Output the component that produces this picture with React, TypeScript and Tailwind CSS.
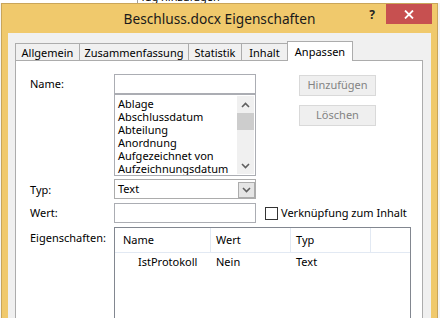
import React from 'react';

const ITEMS = ['Ablage', 'Abschlussdatum', 'Abteilung', 'Anordnung', 'Aufgezeichnet von', 'Aufzeichnungsdatum'];

const Chevron = ({ up }: { up?: boolean }) => (
  <svg width="9" height="6" viewBox="0 0 9 6">
    <polyline
      points={up ? '1,5 4.5,1.5 8,5' : '1,1 4.5,4.5 8,1'}
      fill="none"
      stroke="#606060"
      strokeWidth="1.6"
    />
  </svg>
);

const Tab = ({ label, w }: { label: string; w: string }) => (
  <div className={`${w} h-[17px] border-t border-l border-[#acacac] bg-[#f0f0f0] flex items-center justify-center pt-[1px] leading-none`}>
    {label}
  </div>
);

export default function App() {
  return (
    <div className="w-[440px] h-[318px] overflow-hidden bg-[#f4f4f4] font-['Noto_Sans',sans-serif] text-[11px] text-black">
      {/* strip of the window behind */}
      <div className="h-[3px] overflow-hidden bg-white flex">
        <div className="w-[137px]" />
        <div className="border-l border-[#a0a0a0] pl-[2px] -mt-[10px] leading-[13px] whitespace-nowrap">Tag hinzufügen</div>
      </div>

      <div className="ml-[1px] w-[437px] border border-[#c9a55a] bg-[#f0c96c] px-[6px]">
        {/* title bar */}
        <div className="h-[29px] flex">
          <div className="flex-1" />
          <div className="self-center pt-[1px] text-[13.7px] leading-none text-[#1a1a1a] whitespace-nowrap">Beschluss.docx Eigenschaften</div>
          <div className="flex-1 flex justify-end">
            <div className="mt-[5px] mr-[11px] text-[12px] font-bold leading-[12px] text-[#222]">?</div>
            <div className="w-[46px] h-[20px] -mr-[1px] bg-[#c75050] flex items-center justify-center">
              <svg width="10" height="9" viewBox="0 0 10 9">
                <path d="M1 0.5 L9 8.5 M9 0.5 L1 8.5" stroke="#fff" strokeWidth="1.8" />
              </svg>
            </div>
          </div>
        </div>

        {/* client area */}
        <div className="bg-[#f0f0f0] pt-[8px] pl-[7px] pr-[8px] h-[300px]">
          <div className="flex items-end">
            <Tab label="Allgemein" w="w-[64px]" />
            <Tab label="Zusammenfassung" w="w-[109px]" />
            <Tab label="Statistik" w="w-[53px]" />
            <Tab label="Inhalt" w="w-[46px]" />
            <div className="relative z-10 w-[66px] h-[20px] -mb-px border-t border-x border-[#acacac] bg-white flex justify-center pt-[4px] leading-[12px]">
              Anpassen
            </div>
          </div>

          <div className="border border-[#acacac] bg-white h-[280px] pl-[14px] pt-[13px]">
            {/* Name */}
            <div className="flex items-start">
              <div className="w-[84px] h-[20px] flex items-center">Name:</div>
              <div className="w-[142px]">
                <div className="h-[20px] border border-[#abadb3] bg-white" />
                <div className="h-[82px] border border-[#abadb3] flex">
                  <div className="flex-1 pl-[3px] pt-[2px] leading-[13px] whitespace-nowrap overflow-hidden">
                    {ITEMS.map((it) => (
                      <div key={it}>{it}</div>
                    ))}
                  </div>
                  <div className="w-[17px] my-[1px] mr-[1px] bg-[#f0f0f0] flex flex-col">
                    <div className="h-[17px] flex items-center justify-center"><Chevron up /></div>
                    <div className="h-[17px] bg-[#cdcdcd]" />
                    <div className="flex-1" />
                    <div className="h-[17px] flex items-center justify-center"><Chevron /></div>
                  </div>
                </div>
              </div>
              <div className="ml-[43px] pt-[1px] flex flex-col gap-[9px] text-[#838383]">
                <div className="w-[77px] h-[21px] border border-[#d9d9d9] bg-[#efefef] flex items-center justify-center">Hinzufügen</div>
                <div className="w-[77px] h-[21px] border border-[#d9d9d9] bg-[#efefef] flex items-center justify-center">Löschen</div>
              </div>
            </div>

            {/* Typ */}
            <div className="flex mt-[3px]">
              <div className="w-[84px] h-[20px] flex items-center pt-[2px]">Typ:</div>
              <div className="w-[142px] h-[20px] border border-[#acacac] bg-white flex items-center pl-[3px]">
                <span>Text</span>
                <div className="ml-auto w-[17px] h-[16px] mt-[1px] border border-[#acacac] bg-[#e5e5e5] flex items-center justify-center">
                  <Chevron />
                </div>
              </div>
            </div>

            {/* Wert */}
            <div className="flex items-center mt-[4px]">
              <div className="w-[84px] h-[20px] flex items-center">Wert:</div>
              <div className="w-[142px] h-[20px] border border-[#abadb3] bg-white" />
              <div className="ml-[9px] w-[13px] h-[13px] border border-[#333] bg-white" />
              <div className="ml-[3px]">Verknüpfung zum Inhalt</div>
            </div>

            {/* Eigenschaften */}
            <div className="flex items-start mt-[4px]">
              <div className="w-[84px] pt-[3px] leading-[16px]">Eigenschaften:</div>
              <div className="w-[297px] h-[120px] border border-[#828790] bg-white">
                <div className="h-[25px] border-b border-[#e2e9f3] flex">
                  <div className="w-[96px] border-r border-[#e2e9f3] flex items-center pl-[8px]">Name</div>
                  <div className="w-[80px] border-r border-[#e2e9f3] flex items-center pl-[5px]">Wert</div>
                  <div className="w-[80px] border-r border-[#e2e9f3] flex items-center pl-[5px]">Typ</div>
                </div>
                <div className="h-[19px] flex items-center">
                  <div className="w-[96px] pl-[23px]">IstProtokoll</div>
                  <div className="w-[80px] pl-[5px]">Nein</div>
                  <div className="w-[80px] pl-[5px]">Text</div>
                </div>
              </div>
            </div>
          </div>
        </div>
      </div>
    </div>
  );
}
